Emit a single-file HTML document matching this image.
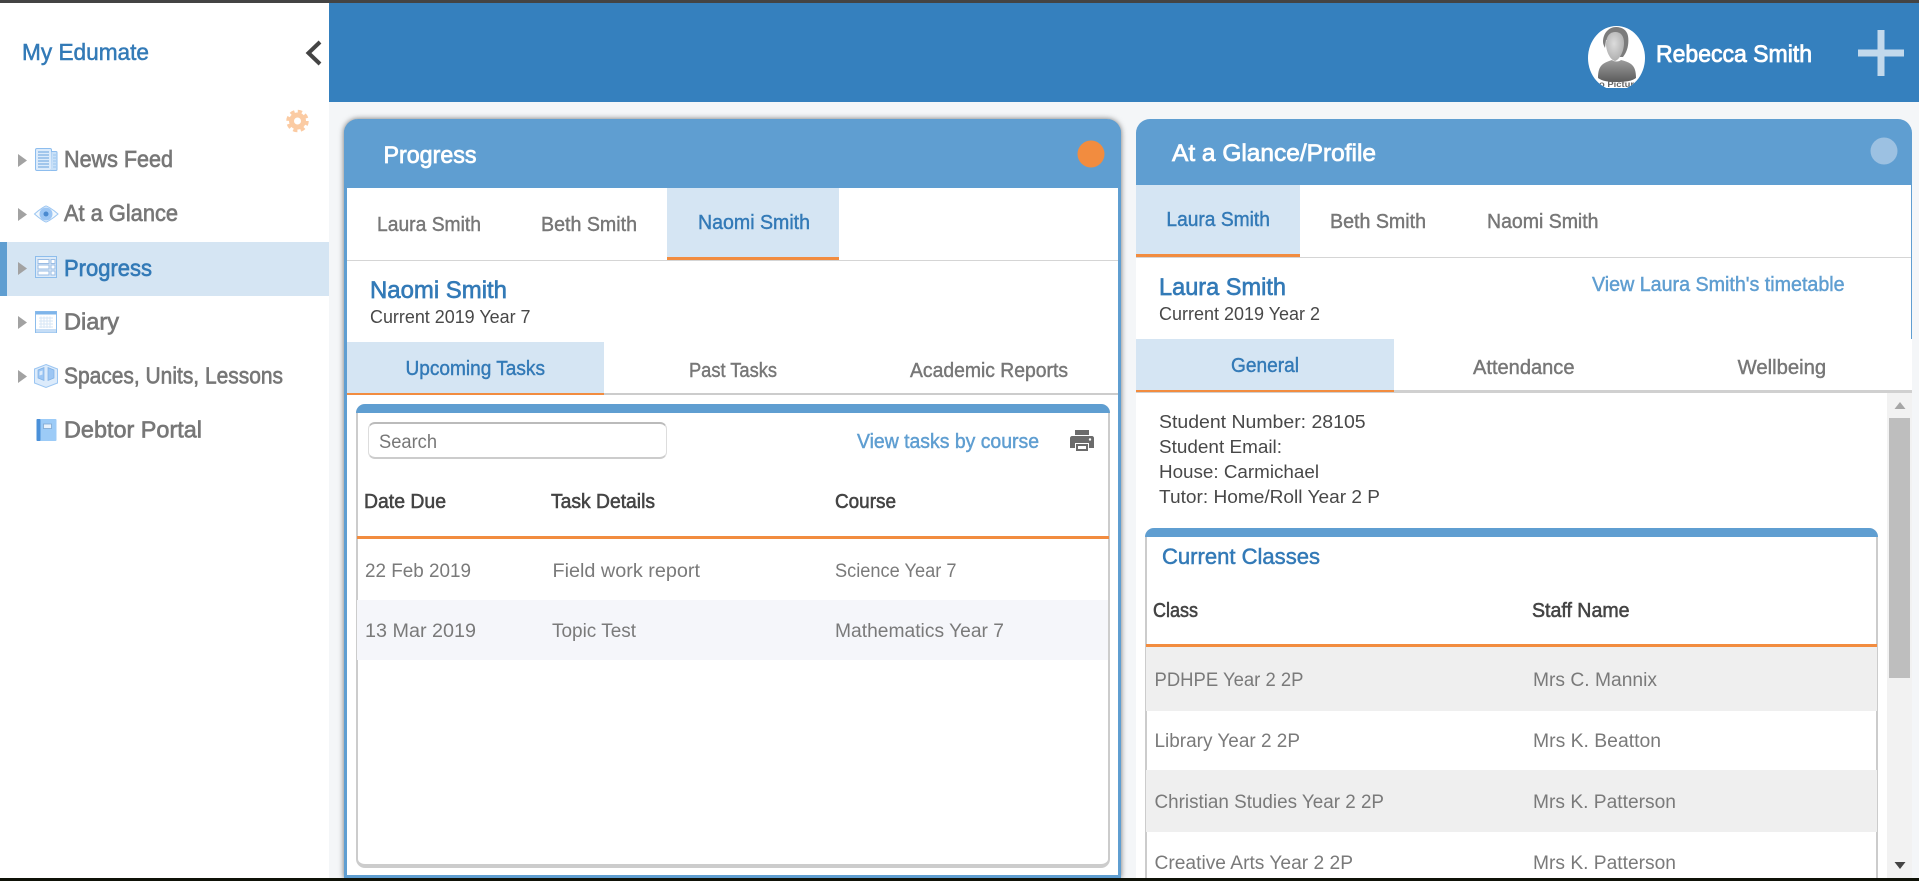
<!DOCTYPE html>
<html lang="en">
<head>
<meta charset="utf-8">
<title>My Edumate</title>
<style>
html,body{margin:0;padding:0;width:1919px;height:881px;overflow:hidden;background:#F4F6F8;font-family:"Liberation Sans",sans-serif}
.b{position:absolute;box-sizing:border-box}
svg.o{position:absolute;left:0;top:0;width:1919px;height:881px}
text{font-family:"Liberation Sans",sans-serif;white-space:pre}
.nav{font-size:23px;fill:#777;stroke:#777;stroke-width:.65}
.act{fill:#337AB7;stroke:#337AB7}
.title{font-size:24px;fill:#fff;stroke:#fff;stroke-width:.75}
.tab{font-size:20px;fill:#777;stroke:#777;stroke-width:.42}
.tabA{font-size:20px;fill:#337AB7;stroke:#337AB7;stroke-width:.42}
.head{font-size:24px;fill:#337AB7;stroke:#337AB7;stroke-width:.65}
.sub{font-size:18px;fill:#484848}
.lnk{font-size:20px;fill:#5F9ED1;stroke:#5F9ED1;stroke-width:.45}
.th{font-size:20px;fill:#444;stroke:#444;stroke-width:.55}
.td{font-size:19px;fill:#7a7a7a}
</style>
</head>
<body>
<!-- window strips -->
<div class="b" style="left:0;top:3px;width:329px;height:875px;background:#fff"></div>
<div class="b" style="left:329px;top:3px;width:1590px;height:99px;background:#3580BE"></div>
<div class="b" style="left:0;top:242px;width:329px;height:54px;background:#D5E5F3"></div>
<div class="b" style="left:0;top:242px;width:7px;height:54px;background:#5F9ED1"></div>

<!-- left panel -->
<div class="b" style="left:344px;top:119px;width:777px;height:759px;background:#fff;border:3px solid #5F9ED1;border-top:0;border-radius:14px 14px 0 0;box-shadow:0 0 6px rgba(0,0,0,.55)"></div>
<div class="b" style="left:344px;top:119px;width:777px;height:69px;background:#5F9ED1;border-radius:14px 14px 0 0"></div>
<div class="b" style="left:347px;top:260px;width:771px;height:1px;background:#d5d5d5"></div>
<div class="b" style="left:667px;top:188px;width:172px;height:72px;background:#D5E5F3;border-bottom:3px solid #F28C3F"></div>
<div class="b" style="left:347px;top:393px;width:771px;height:2px;background:#ccc"></div>
<div class="b" style="left:347px;top:342px;width:257px;height:53px;background:#D5E5F3;border-bottom:2px solid #F28C3F"></div>
<!-- tasks card -->
<div class="b" style="left:356px;top:404px;width:754px;height:464px;background:#fff;border:1px solid #ccc;border-width:0 2px 4px 2px;border-radius:9px 9px 9px 9px"></div>
<div class="b" style="left:356px;top:404px;width:754px;height:9px;background:#5F9ED1;border-radius:9px 9px 0 0"></div>
<div class="b" style="left:368px;top:422px;width:299px;height:37px;background:#fff;border:1px solid #ddd;border-top:2px solid #bbb;border-bottom:2px solid #ccc;border-radius:7px"></div>
<div class="b" style="left:357px;top:536px;width:752px;height:3px;background:#F28C3F"></div>
<div class="b" style="left:357px;top:600px;width:751px;height:60px;background:#F5F6FA"></div>

<!-- right panel -->
<div class="b" style="left:1136px;top:119px;width:776px;height:759px;background:#fff;border-radius:14px 14px 0 0"></div>
<div class="b" style="left:1136px;top:119px;width:776px;height:66px;background:#5F9ED1;border-radius:14px 14px 0 0"></div>
<div class="b" style="left:1911px;top:185px;width:1px;height:154px;background:#5F9ED1"></div>
<div class="b" style="left:1136px;top:257px;width:775px;height:1px;background:#d5d5d5"></div>
<div class="b" style="left:1136px;top:185px;width:164px;height:72px;background:#D5E5F3;border-bottom:3px solid #F28C3F"></div>
<div class="b" style="left:1136px;top:390px;width:776px;height:3px;background:#d0d0d0"></div>
<div class="b" style="left:1136px;top:339px;width:258px;height:53px;background:#D5E5F3;border-bottom:2px solid #F28C3F"></div>
<!-- scrollbar -->
<div class="b" style="left:1887px;top:393px;width:25px;height:485px;background:#F2F2F2"></div>
<div class="b" style="left:1889px;top:418px;width:21px;height:260px;background:#BEBEBE"></div>
<!-- classes card -->
<div class="b" style="left:1145px;top:528px;width:733px;height:352px;background:#fff;border:solid #ccc;border-width:0 2px;border-radius:9px 9px 0 0"></div>
<div class="b" style="left:1145px;top:528px;width:733px;height:9px;background:#5F9ED1;border-radius:9px 9px 0 0"></div>
<div class="b" style="left:1146px;top:644px;width:731px;height:3px;background:#F28C3F"></div>
<div class="b" style="left:1146px;top:647px;width:731px;height:64px;background:#EFEFEF"></div>
<div class="b" style="left:1146px;top:770px;width:731px;height:62px;background:#EFEFEF"></div>

<svg class="o" viewBox="0 0 1919 881" xmlns="http://www.w3.org/2000/svg">
<!-- chevron -->
<polyline points="320,42 308.500,53 320,64" fill="none" stroke="#444" stroke-width="4"/>
<!-- gear -->
<g>
<circle cx="297.500" cy="121" r="8.500" fill="#FBCBA3"/>
<circle cx="297.500" cy="121" r="9.500" fill="none" stroke="#FBCBA3" stroke-width="3.500" stroke-dasharray="4.200 3.260"/>
<circle cx="297.500" cy="121" r="3.500" fill="#fff"/>
</g>
<!-- nav triangles -->
<g fill="#a2a2a2">
<path d="M18 154l9 6.500-9 6.500z"/><path d="M18 208l9 6.500-9 6.500z"/><path d="M18 262l9 6.500-9 6.500z"/>
<path d="M18 316l9 6.500-9 6.500z"/><path d="M18 370l9 6.500-9 6.500z"/>
</g>
<!-- news icon -->
<g>
<rect x="35.500" y="148.500" width="16" height="22" rx="1.500" fill="#DCEBFB" stroke="#8DBDEE"/>
<path d="M51.500 151.500h4.500c.6 0 1 .4 1 1v17c0 .6-.4 1-1 1h-5" fill="#C8E0F8" stroke="#8DBDEE"/>
<path d="M38 152h11M38 155h11M38 158h11M38 161h11M38 164h11M38 167h11" stroke="#8DBAE8" stroke-width="1.500"/>
<path d="M53 155h3M53 158h3M53 161h3M53 164h3M53 167h3" stroke="#9CC6EE" stroke-width="1"/>
</g>
<!-- eye icon -->
<g>
<path d="M34.500 214c6-5.500 11-8 11.500-8s6 2.500 12 8c-6 5.500-11.500 8-12 8s-5.500-2.500-11.500-8z" fill="#F2F8FD" stroke="#9CC6F2"/>
<circle cx="46" cy="214" r="6.500" fill="#9CC6F4"/>
<circle cx="46" cy="214" r="2.500" fill="#4A8AD0"/>
</g>
<!-- progress icon -->
<g>
<rect x="35.500" y="256.500" width="21" height="21" fill="#DCEAF8" stroke="#8DBDEC"/>
<g fill="#fff" stroke="#9ABCE4"><rect x="38" y="259.500" width="11" height="4"/><rect x="38" y="265" width="11" height="4"/><rect x="38" y="271" width="11" height="4"/>
<rect x="51" y="259.500" width="4" height="4"/><rect x="51" y="265" width="4" height="4"/><rect x="51" y="271" width="4" height="4"/></g>
</g>
<!-- diary icon -->
<g>
<rect x="35.500" y="311.500" width="21" height="21" fill="#fff" stroke="#8DBDEC"/>
<rect x="35.500" y="311.500" width="21" height="3" fill="#7FB5EA"/>
<rect x="36" y="329" width="20" height="3.500" fill="#C5DDF6"/>
<path d="M39 318h14M39 321h14M39 324h14M39 327h14M41 316.500v11.500M44 316.500v11.500M47 316.500v11.500M50 316.500v11.500" stroke="#D6E6F6" stroke-width="1"/>
</g>
<!-- spaces icon -->
<g>
<path d="M46 364.500l11.500 4.500v14l-11.500 4.500-11.500-4.500v-14z" fill="#DCEBFB" stroke="#9CC6F2"/>
<path d="M38 370l6-2.500v13l-6-2.500zM54 370l-6-2.500v13l6-2.500z" fill="#9CC6F4" stroke="#7FB0E4" stroke-width=".7"/>
<path d="M39.500 371.500l3-1v4l-3 1z" fill="#DCEBFB"/>
</g>
<!-- debtor icon -->
<g>
<rect x="36.500" y="419" width="20" height="22" rx="1" fill="#9CCBF7"/>
<rect x="36.500" y="419" width="4" height="22" rx="1" fill="#4A90D9"/>
<rect x="43.500" y="424" width="8" height="4.500" fill="#E8F2FC" stroke="#7FA7D0" stroke-width=".8"/>
</g>

<!-- avatar -->
<defs><clipPath id="av"><path d="M1588 26h57v62h-57z"/></clipPath>
<clipPath id="av2"><ellipse cx="1616.500" cy="58" rx="28.500" ry="32"/></clipPath>
<linearGradient id="bd" x1="0" y1="0" x2="0" y2="1"><stop offset="0" stop-color="#9c9c9c"/><stop offset="1" stop-color="#5c5c5c"/></linearGradient>
<radialGradient id="fc" cx=".45" cy=".4" r=".7"><stop offset="0" stop-color="#dcdcdc"/><stop offset="1" stop-color="#a8a8a8"/></radialGradient></defs>
<g clip-path="url(#av)"><g clip-path="url(#av2)">
<rect x="1588" y="26" width="57" height="64" fill="#fff"/>
<path d="M1598 78c0-6 1-11 5-14 3-2 6-3 9-4 2 2 7 2 9 0 4 1 7 2 10 4 4 3 5 8 5 14-4 3-10 4-19 4s-15-1-19-4z" fill="url(#bd)"/>
<path d="M1603 42c0-9 6-15 13-15 6 0 11 3 12 9 1 6 0 13-3 18l-2 3h-3v-18l-14 1-1 8c-1-2-2-4-2-6z" fill="#7c7c7c"/>
<path d="M1606 44c0-8 4-12 9-12 6 0 9 4 9 11 0 9-5 17-9 18-5-1-9-10-9-17z" fill="url(#fc)"/>
<text x="1599" y="87" font-size="8.500" font-weight="700" fill="#666" textLength="35" lengthAdjust="spacingAndGlyphs">o Pictur</text>
</g></g>
<!-- plus -->
<path d="M1881 30v46M1858 53h46" stroke="#C2D9EC" stroke-width="7" fill="none"/>

<!-- circles -->
<circle cx="1091" cy="154" r="13.500" fill="#F28C3F"/>
<circle cx="1884" cy="151" r="13.500" fill="#9CC1E2"/>

<!-- printer -->
<g>
<path d="M1075 430h14v5h-14z" fill="#6b6b6b"/>
<path d="M1072 436h20c1 0 2 1 2 2v10h-5v-5h-14v5h-5v-10c0-1 1-2 2-2z" fill="#6b6b6b"/>
<path d="M1077 445h10v5h-10z" fill="#fff" stroke="#6b6b6b" stroke-width="2"/>
<circle cx="1090" cy="439.500" r="1.200" fill="#fff"/>
</g>

<!-- scroll arrows -->
<path d="M1900 402l5.500 7h-11z" fill="#a6a6a6"/>
<path d="M1900 869l5.500-7h-11z" fill="#444"/>

<!-- sidebar text -->
<text x="22" y="60" font-size="23" fill="#337AB7" stroke="#337AB7" stroke-width=".5" textLength="127" lengthAdjust="spacingAndGlyphs">My Edumate</text>
<text class="nav" x="64" y="167" textLength="109" lengthAdjust="spacingAndGlyphs">News Feed</text>
<text class="nav" x="64" y="221" textLength="114" lengthAdjust="spacingAndGlyphs">At a Glance</text>
<text class="nav act" x="64" y="276" textLength="88" lengthAdjust="spacingAndGlyphs">Progress</text>
<text class="nav" x="64" y="329.500" textLength="55" lengthAdjust="spacingAndGlyphs">Diary</text>
<text class="nav" x="64" y="383.500" textLength="219" lengthAdjust="spacingAndGlyphs">Spaces, Units, Lessons</text>
<text class="nav" x="64" y="437.500" textLength="138" lengthAdjust="spacingAndGlyphs">Debtor Portal</text>

<!-- header text -->
<text x="1656" y="62" font-size="24" fill="#fff" stroke="#fff" stroke-width=".8" textLength="156" lengthAdjust="spacingAndGlyphs">Rebecca Smith</text>

<!-- left panel text -->
<text class="title" x="383.500" y="163" textLength="93" lengthAdjust="spacingAndGlyphs">Progress</text>
<text class="tab" x="377" y="231" textLength="104" lengthAdjust="spacingAndGlyphs">Laura Smith</text>
<text class="tab" x="541" y="231" textLength="96" lengthAdjust="spacingAndGlyphs">Beth Smith</text>
<text class="tabA" x="698" y="229" textLength="112" lengthAdjust="spacingAndGlyphs">Naomi Smith</text>
<text class="head" x="370" y="298" textLength="137" lengthAdjust="spacingAndGlyphs">Naomi Smith</text>
<text class="sub" x="370" y="323" textLength="160.500" lengthAdjust="spacingAndGlyphs">Current 2019 Year 7</text>
<text class="tabA" x="405.500" y="375" textLength="139.500" lengthAdjust="spacingAndGlyphs">Upcoming Tasks</text>
<text class="tab" x="689" y="377" textLength="88" lengthAdjust="spacingAndGlyphs">Past Tasks</text>
<text class="tab" x="910" y="377" textLength="158" lengthAdjust="spacingAndGlyphs">Academic Reports</text>
<text x="379" y="448" font-size="19" fill="#777" textLength="58" lengthAdjust="spacingAndGlyphs">Search</text>
<text class="lnk" x="857" y="448" textLength="182" lengthAdjust="spacingAndGlyphs">View tasks by course</text>
<text class="th" x="364" y="508" textLength="82" lengthAdjust="spacingAndGlyphs">Date Due</text>
<text class="th" x="551" y="508" textLength="104" lengthAdjust="spacingAndGlyphs">Task Details</text>
<text class="th" x="835" y="508" textLength="61" lengthAdjust="spacingAndGlyphs">Course</text>
<text class="td" x="365" y="577" textLength="106" lengthAdjust="spacingAndGlyphs">22 Feb 2019</text>
<text class="td" x="552.500" y="577" textLength="147.500" lengthAdjust="spacingAndGlyphs">Field work report</text>
<text class="td" x="835" y="577" textLength="121.500" lengthAdjust="spacingAndGlyphs">Science Year 7</text>
<text class="td" x="365" y="637" textLength="111" lengthAdjust="spacingAndGlyphs">13 Mar 2019</text>
<text class="td" x="552" y="637" textLength="84" lengthAdjust="spacingAndGlyphs">Topic Test</text>
<text class="td" x="835" y="637" textLength="169" lengthAdjust="spacingAndGlyphs">Mathematics Year 7</text>

<!-- right panel text -->
<text class="title" x="1172" y="161" textLength="204" lengthAdjust="spacingAndGlyphs">At a Glance/Profile</text>
<text class="tabA" x="1166.400" y="226" textLength="103.500" lengthAdjust="spacingAndGlyphs">Laura Smith</text>
<text class="tab" x="1330" y="228" textLength="96" lengthAdjust="spacingAndGlyphs">Beth Smith</text>
<text class="tab" x="1487" y="228" textLength="111.500" lengthAdjust="spacingAndGlyphs">Naomi Smith</text>
<text class="head" x="1159" y="295" textLength="127" lengthAdjust="spacingAndGlyphs">Laura Smith</text>
<text class="lnk" x="1592" y="291" textLength="252.600" lengthAdjust="spacingAndGlyphs">View Laura Smith's timetable</text>
<text class="sub" x="1159" y="320" textLength="161" lengthAdjust="spacingAndGlyphs">Current 2019 Year 2</text>
<text class="tabA" x="1231" y="372" textLength="68" lengthAdjust="spacingAndGlyphs">General</text>
<text class="tab" x="1473" y="374" textLength="101.500" lengthAdjust="spacingAndGlyphs">Attendance</text>
<text class="tab" x="1737.600" y="374" textLength="88.600" lengthAdjust="spacingAndGlyphs">Wellbeing</text>
<text class="sub" x="1159" y="428" textLength="206.600" lengthAdjust="spacingAndGlyphs">Student Number: 28105</text>
<text class="sub" x="1159" y="453" textLength="123" lengthAdjust="spacingAndGlyphs">Student Email:</text>
<text class="sub" x="1159" y="478" textLength="160" lengthAdjust="spacingAndGlyphs">House: Carmichael</text>
<text class="sub" x="1159" y="503" textLength="221" lengthAdjust="spacingAndGlyphs">Tutor: Home/Roll Year 2 P</text>
<text x="1162" y="564" font-size="22" fill="#337AB7" stroke="#337AB7" stroke-width=".5" textLength="158" lengthAdjust="spacingAndGlyphs">Current Classes</text>
<text class="th" x="1153" y="617" textLength="45" lengthAdjust="spacingAndGlyphs">Class</text>
<text class="th" x="1532" y="617" textLength="97.500" lengthAdjust="spacingAndGlyphs">Staff Name</text>
<text class="td" x="1154.500" y="686" textLength="149" lengthAdjust="spacingAndGlyphs">PDHPE Year 2 2P</text>
<text class="td" x="1533" y="686" textLength="124" lengthAdjust="spacingAndGlyphs">Mrs C. Mannix</text>
<text class="td" x="1154.500" y="747" textLength="145.500" lengthAdjust="spacingAndGlyphs">Library Year 2 2P</text>
<text class="td" x="1533" y="747" textLength="128" lengthAdjust="spacingAndGlyphs">Mrs K. Beatton</text>
<text class="td" x="1154.500" y="808" textLength="229.500" lengthAdjust="spacingAndGlyphs">Christian Studies Year 2 2P</text>
<text class="td" x="1533" y="808" textLength="143" lengthAdjust="spacingAndGlyphs">Mrs K. Patterson</text>
<text class="td" x="1154.500" y="869" textLength="198.500" lengthAdjust="spacingAndGlyphs">Creative Arts Year 2 2P</text>
<text class="td" x="1533" y="869" textLength="143" lengthAdjust="spacingAndGlyphs">Mrs K. Patterson</text>
</svg>

<div class="b" style="left:0;top:0;width:1919px;height:3px;background:#444"></div>
<div class="b" style="left:0;top:878px;width:1919px;height:3px;background:#0F1208"></div>
</body>
</html>
